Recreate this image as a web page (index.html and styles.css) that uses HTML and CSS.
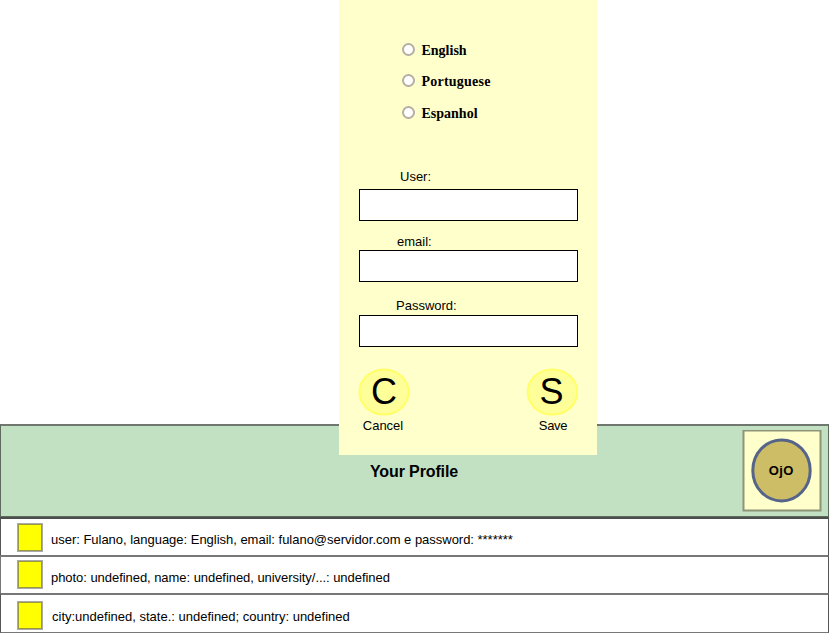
FILE: index.html
```
<!DOCTYPE html>
<html lang="en">
<head>
<meta charset="utf-8">
<title>Your Profile</title>
<link rel="stylesheet" href="styles.css">
</head>
<body>
<main class="profile">
  <header class="profile-header">
    <h1 class="profile-title">Your Profile</h1>
    <div class="logo"><svg width="80" height="83" viewBox="0 0 80 83"><rect x="1.5" y=".5" width="77" height="80" fill="#ffffcc" stroke="#8d9478" stroke-width="2"/><ellipse cx="39.5" cy="40.4" rx="28.7" ry="30.5" fill="#ccbd66" stroke="#56648a" stroke-width="3"/><text class="logo-text" x="39.2" y="45" text-anchor="middle">OjO</text></svg></div>
  </header>
  <section class="row row-user"><span class="marker"></span><p class="row-text">user: Fulano, language: English, email: fulano@servidor.com e password: *******</p></section>
  <section class="row row-name"><span class="marker"></span><p class="row-text">photo: undefined, name: undefined, university/...: undefined</p></section>
  <section class="row row-city"><span class="marker"></span><p class="row-text">city:undefined, state.: undefined; country: undefined</p></section>
</main>
<form class="panel">
  <div class="languages">
    <label class="language"><input class="radio" type="radio" name="language"><span class="english">English</span></label>
    <label class="language"><input class="radio" type="radio" name="language"><span class="portuguese">Portuguese</span></label>
    <label class="language"><input class="radio" type="radio" name="language"><span class="espanhol">Espanhol</span></label>
  </div>
  <label class="field field-user"><span class="label">User:</span><input class="input" type="text"></label>
  <label class="field field-email"><span class="label">email:</span><input class="input" type="text"></label>
  <label class="field field-password"><span class="label">Password:</span><input class="input" type="password"></label>
  <div class="actions">
    <div class="action cancel"><svg width="52" height="48" viewBox="0 0 52 48"><ellipse cx="26" cy="24" rx="24.5" ry="22.5" fill="#ffff99" stroke="#ffff66" stroke-width="2"/><text class="letter" x="26" y="36" text-anchor="middle">C</text></svg><span class="caption">Cancel</span></div>
    <div class="action save"><svg width="52" height="48" viewBox="0 0 52 48"><ellipse cx="26.5" cy="24" rx="24.8" ry="22.5" fill="#ffff99" stroke="#ffff66" stroke-width="2"/><text class="letter" x="25.5" y="36" text-anchor="middle">S</text></svg><span class="caption">Save</span></div>
  </div>
</form>
</body>
</html>
```
FILE: styles.css
```
* { box-sizing: border-box; }
body {
  margin: 0;
  height: 633px;
  overflow: hidden;
  position: relative;
  background: #fff;
  color: #000;
  font: 13px/16px "Liberation Sans", Arial, sans-serif;
}
svg { display: block; }
h1, p { margin: 0; }

.profile { padding-top: 424px; }
.profile-header {
  display: flex;
  justify-content: space-between;
  width: 829px;
  height: 93px;
  padding: 4px 6px 0 369px;
  background: #c2e0c2;
  border: 1px solid #5f6b5f;
  border-top: 2px solid #6f776f;
}
.profile-title {
  padding-top: 33px;
  font-size: 16px;
  line-height: 18px;
  letter-spacing: -.12px;
}
.logo-text { font-size: 13px; font-weight: bold; letter-spacing: .4px; }

.row {
  display: flex;
  height: 38px;
  padding-left: 16px;
  border: 1px solid #555;
  border-top: 2px solid #777;
  border-bottom: 0;
}
.row-user { border-top-color: #4b4f4b; }
.row-name { border-left-color: #777; }
.row-city { height: 40px; border-bottom: 1px solid #777; }
.row-user .marker { margin-top: 4px; }
.row-name .marker { margin-top: 3px; }
.row-city .marker { margin-top: 6px; }
.row-user .row-text { padding-top: 13px; letter-spacing: -.02px; }
.row-name .row-text { padding-top: 13px; letter-spacing: -.05px; }
.row-city .row-text { padding-top: 14px; margin-left: 9px; }
.marker {
  width: 26px;
  height: 29px;
  background: #ff0;
  border: 2px solid #99993d;
  outline: 1px solid #aaa;
  outline-offset: -1px;
}
.row-text { margin-left: 8px; white-space: nowrap; }

.panel {
  position: absolute;
  top: 0;
  left: 339px;
  width: 258px;
  height: 455px;
  padding: 42px 19px 0 20px;
  background: #ffffcc;
}
.languages { height: 126px; padding-left: 43px; }
.language {
  display: flex;
  align-items: center;
  gap: 7px;
  height: 16px;
  margin-bottom: 15px;
  font: bold 14px/16px "Liberation Serif", "Times New Roman", serif;
}
.language span { padding-top: 2px; margin-left: -.5px; }
.language:nth-child(2) { margin-bottom: 16px; }
.portuguese { letter-spacing: .22px; }
.radio {
  appearance: none;
  width: 13px;
  height: 13px;
  margin: 0 0 1px;
  border: 2px solid #b5afa5;
  border-radius: 50%;
  background: #fff;
}
.field { display: flex; flex-direction: column; }
.field-user { height: 65px; }
.field-email { height: 64px; }
.field-password { height: 71px; }
.label { height: 21px; padding: 1px 0 0 41px; }
.field-email .label { height: 17px; padding-left: 38px; }
.field-password .label { height: 18px; padding-left: 37px; }
.input {
  width: 219px;
  height: 32px;
  border: 1px solid #000;
  background: #fff;
  border-radius: 0;
}
.actions { display: flex; justify-content: space-between; }
.action { display: flex; flex-direction: column; align-items: center; width: 52px; }
.cancel { margin-left: -1px; }
.letter { font-size: 36px; }
.caption { margin: 2px 2px 0 0; }
.save .caption { margin: 2px 0 0 2px; letter-spacing: -.3px; }
```
